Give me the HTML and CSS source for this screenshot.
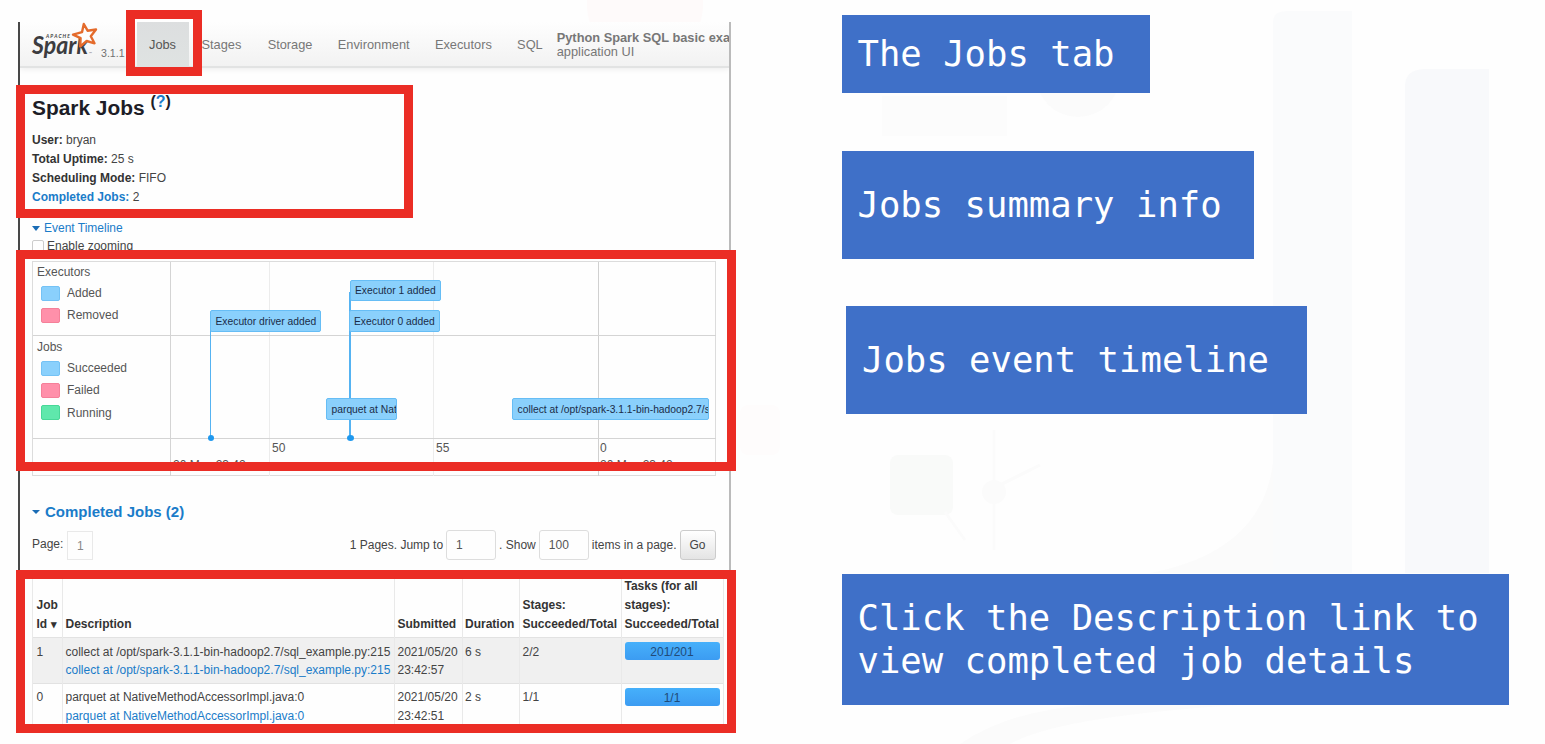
FILE: index.html
```html
<!DOCTYPE html>
<html lang="en">
<head>
<meta charset="utf-8">
<title>Spark Jobs</title>
<link rel="stylesheet" href="styles.css">
</head>
<body>
<svg class="backdrop" viewBox="0 0 1545 744" aria-hidden="true">
  <path d="M1274 410V450Q1270 550 1150 573H1352V410Z" fill="#fbfbfb"/>
  <path d="M1273 573V22Q1273 11 1288 11H1352V573Z" fill="#fafbfc"/>
  <path d="M1405 573V86Q1405 70 1424 69H1489V573Z" fill="#f8f9fb"/>
  <path d="M960 744Q1010 710 1090 705H1240Q1060 716 1010 744Z" fill="#fbfbfb"/>
  <rect x="890" y="455" width="63" height="60" rx="8" fill="#f9faf9"/>
  <path d="M945 512L965 540M994 430V550M994 488L1040 465" stroke="#fbfbfb" stroke-width="3" fill="none"/>
  <circle cx="994" cy="492" r="12" fill="#fbfbfb"/>
  <circle cx="645" cy="5" r="58" fill="#fefafa"/>
  <circle cx="1078" cy="75" r="42" fill="#fbfbfb"/>
  <rect x="882" y="96" width="125" height="40" fill="#fcfcfc"/>
  <rect x="740" y="405" width="40" height="50" rx="8" fill="#fefcfc"/>
</svg>
<main class="slide">
  <section class="shot">
    <div class="pane">
      <nav class="navbar">
        <svg class="logo" viewBox="0 0 66 38" role="img" aria-label="Apache Spark">
          <text class="logo-small" x="14" y="16" textLength="24">APACHE</text>
          <text class="logo-word" x="0" y="32" textLength="56" lengthAdjust="spacingAndGlyphs">Spark</text>
          <path d="M51.8 2L55.6 8.7L64 7.5L58.8 14.3L62.5 21.3L54.7 19L48.2 24.5L48.6 16.2L41 12.6L50 10.2Z" fill="#fdfdfd" stroke="#e46b2c" stroke-width="2.4" stroke-linejoin="round"/>
          <text class="logo-tm" x="57" y="33">™</text>
        </svg>
        <span class="version">3.1.1</span>
        <a class="tab active">Jobs</a>
        <a class="tab">Stages</a>
        <a class="tab">Storage</a>
        <a class="tab">Environment</a>
        <a class="tab">Executors</a>
        <a class="tab">SQL</a>
        <p class="app"><b>Python Spark SQL basic example</b><br>application UI</p>
      </nav>
      <header class="summary">
        <h1>Spark Jobs <sup>(<a>?</a>)</sup></h1>
        <ul>
          <li><b>User:</b> bryan</li>
          <li><b>Total Uptime:</b> 25 s</li>
          <li><b>Scheduling Mode:</b> FIFO</li>
          <li><a><b>Completed Jobs:</b></a> 2</li>
        </ul>
      </header>
      <div class="toggle"><i class="caret"></i><a>Event Timeline</a></div>
      <div class="zooming"><i class="check"></i>Enable zooming</div>
      <div class="timeline">
        <div class="legend">
          <h2>Executors</h2>
          <p><i class="blue"></i>Added</p>
          <p><i class="pink"></i>Removed</p>
        </div>
        <div class="legend jobs">
          <h2>Jobs</h2>
          <p><i class="blue"></i>Succeeded</p>
          <p><i class="pink"></i>Failed</p>
          <p><i class="green"></i>Running</p>
        </div>
        <div class="legend-foot"></div>
        <div class="canvas">
          <i class="grid g50"></i><i class="grid g55"></i><i class="grid g0 major"></i>
          <i class="rule r1"></i><i class="rule r2"></i>
          <i class="stem s1"></i><i class="stem s2"></i>
          <i class="dot d1"></i><i class="dot d2"></i>
          <span class="event e1">Executor driver added</span>
          <span class="event e2">Executor 1 added</span>
          <span class="event e3">Executor 0 added</span>
          <span class="event e4">parquet at NativeMethodAccessorImpl</span>
          <span class="event e5">collect at /opt/spark-3.1.1-bin-hadoop2.7/sql</span>
          <span class="tick t50">50</span><span class="tick t55">55</span><span class="tick t0">0</span>
          <span class="tick day day1">20 May 23:42</span><span class="tick day day2">20 May 23:42</span>
        </div>
      </div>
      <h3 class="completed"><i class="caret"></i><a>Completed Jobs (2)</a></h3>
      <div class="pager">
        <span class="page">Page:</span><span class="current">1</span>
        <span class="jump">1 Pages. Jump to</span><span class="field">1</span>
        <span class="show">. Show</span><span class="field">100</span>
        <span class="items">items in a page.</span><span class="go">Go</span>
      </div>
      <table>
        <colgroup><col class="c1"><col class="c2"><col class="c3"><col class="c4"><col class="c5"><col class="c6"></colgroup>
        <thead><tr><th>Job<br>Id <small>▾</small></th><th>Description</th><th>Submitted</th><th>Duration</th><th>Stages:<br>Succeeded/Total</th><th>Tasks (for all<br>stages):<br>Succeeded/Total</th></tr></thead>
        <tbody>
          <tr><td>1</td><td>collect at /opt/spark-3.1.1-bin-hadoop2.7/sql_example.py:215<br><a>collect at /opt/spark-3.1.1-bin-hadoop2.7/sql_example.py:215</a></td><td>2021/05/20<br>23:42:57</td><td>6 s</td><td>2/2</td><td><div class="bar">201/201</div></td></tr>
          <tr><td>0</td><td>parquet at NativeMethodAccessorImpl.java:0<br><a>parquet at NativeMethodAccessorImpl.java:0</a></td><td>2021/05/20<br>23:42:51</td><td>2 s</td><td>1/1</td><td><div class="bar">1/1</div></td></tr>
        </tbody>
      </table>
    </div>
    <i class="mark mark-tab"></i>
    <i class="mark mark-summary"></i>
    <i class="mark mark-timeline"></i>
    <i class="mark mark-table"></i>
  </section>
  <aside class="notes">
    <p class="note n1">The Jobs tab</p>
    <p class="note n2">Jobs summary info</p>
    <p class="note n3">Jobs event timeline</p>
    <p class="note n4">Click the Description link to<br>view completed job details</p>
  </aside>
</main>
</body>
</html>
```
FILE: styles.css
```css
* { box-sizing: border-box; }
body { margin: 0; width: 1545px; height: 744px; overflow: hidden; background: #fefefe; font: 12px/18.7px "Liberation Sans", Arial, sans-serif; color: #444; }
h1, h2, h3, p, ul { margin: 0; padding: 0; list-style: none; }
a { color: #1a7cc9; }
.backdrop { position: absolute; left: 0; top: 0; width: 1545px; height: 744px; }
.slide { position: relative; display: flex; }
.shot { width: 841.5px; padding: 22px 0 0 18px; }
.pane { width: 713px; height: 706px; overflow: hidden; background: #fefefe; border-left: 2px solid #484848; border-right: 2px solid #bbb; }

.navbar { display: flex; align-items: center; height: 46px; padding-left: 12px; background: linear-gradient(#fefefe, #f2f2f2); border-bottom: 2px solid #e2e3e3; box-shadow: 0 1px 6px #00000014; font-size: 12.8px; white-space: nowrap; }
.logo { width: 66px; height: 38px; flex: none; margin-top: -7px; overflow: visible; }
.logo-word { font: italic bold 25.5px Lato, sans-serif; fill: #3c3c40; }
.logo-small { font: italic bold 5px Lato, sans-serif; fill: #444; }
.logo-tm { font: 4px Lato, sans-serif; fill: #777; }
.version { width: 39px; padding: 18px 0 0 3px; font-size: 10.6px; color: #707070; flex: none; }
.tab { color: #777; margin-right: 25.3px; padding-top: 2px; flex: none; }
.tab.active { width: 52px; height: 46px; line-height: 46px; margin: 0 12.5px 0 0; padding: 1px 1px 0 0; text-align: center; background: linear-gradient(#dcdedf, #dfe3e2); color: #555; }
.tab:nth-last-child(2) { margin-right: 13px; }
.tab:nth-last-child(-n+5) { position: relative; left: 1px; }
.app { padding: 1px 0 0 2px; line-height: 13.5px; color: #777; }

.summary { height: 149px; padding: 25px 12px 0; }
h1 { font-size: 20.9px; line-height: 30px; color: #1d1d27; }
sup { font-size: 16px; line-height: 0; vertical-align: 8px; }
.summary ul { padding-top: 8.4px; }
.summary b { color: #333; }
.summary a b { color: #1a7cc9; }
.toggle { display: flex; align-items: center; height: 22px; padding-left: 12px; }
.caret { width: 0; height: 0; border: 4px solid transparent; border-top: 5px solid #1a6cb5; border-bottom: 0; margin-right: 4px; }
.completed .caret { border-top-width: 4px; margin-right: 5px; }
.zooming { display: flex; align-items: center; height: 15px; padding-left: 12px; }
.check { width: 12px; height: 13px; border: 1px solid #ccc; border-radius: 2px; margin-right: 3px; }

.timeline { display: grid; grid-template: 74px 103px 37px / 138px 545px; width: 684px; height: 215px; margin: 7px 0 0 12px; border: 1px solid #dcdcdc; }
.legend { padding: 1px 4px 0 4px; border: solid #d4d4d4; border-width: 0 1px 1px 0; color: #555; }
.legend h2 { font-size: 12px; font-weight: normal; line-height: 18px; }
.legend p { display: flex; align-items: center; height: 22.4px; padding-left: 3.5px; position: relative; top: 1px; }
.legend i { width: 19px; height: 15px; margin-right: 7.5px; border: 1px solid; border-radius: 2px; }
.jobs { padding-top: 2px; }
.legend .blue { background: #8ad0fc; border-color: #74c2f5; }
.legend .pink { background: #ff90aa; border-color: #f58099; }
.legend .green { background: #5fe8ac; border-color: #48d898; }
.legend-foot { border-right: 1px solid #d4d4d4; }
.canvas { position: relative; grid-area: 1 / 2 / 4 / 3; overflow: hidden; }
.canvas > * { position: absolute; }
.grid { top: 0; bottom: 0; width: 1px; background: #ececec; }
.grid.major { background: #d0d0d0; }
.g50 { left: 98px; } .g55 { left: 262px; } .g0 { left: 427px; }
.rule { left: 0; right: 0; height: 1px; background: #d4d4d4; }
.r1 { top: 73px; } .r2 { top: 176px; }
.stem { width: 2px; background: #55b3f2; }
.s1 { left: 39px; top: 60px; height: 117px; width: 1px; } .s2 { left: 178px; top: 30px; height: 147px; }
.dot { width: 6px; height: 6px; border-radius: 50%; background: #1e98ee; top: 173px; }
.d1 { left: 37px; } .d2 { left: 175.5px; width: 7px; }
.event { height: 22px; padding-left: 4.5px; overflow: hidden; white-space: nowrap; background: #8ad0fc; border: 1px solid #66bdf5; border-radius: 2px; font-size: 10.3px; line-height: 21px; color: #1a2c48; }
.e1 { left: 39px; top: 48px; width: 111px; }
.e2 { left: 178.5px; top: 18px; width: 91px; height: 21px; line-height: 19px; }
.e3 { left: 178px; top: 48px; width: 91px; padding-left: 4px; }
.e4 { left: 155px; top: 136px; width: 71px; }
.e5 { left: 341px; top: 136px; width: 197px; }
.tick { font-size: 12px; color: #555; }
.t50 { left: 101px; top: 177px; } .t55 { left: 265px; top: 177px; } .t0 { left: 429px; top: 177px; }
.day { top: 194px; height: 14px; overflow: hidden; } .day1 { left: 2px; } .day2 { left: 429px; }

.completed { display: flex; align-items: center; height: 30px; margin-top: 21px; padding-left: 12px; font-size: 15px; }
.pager { display: flex; align-items: center; height: 36px; padding: 0 13.5px 0 12px; white-space: nowrap; }
.page { padding-bottom: 2px; }
.current { width: 26px; height: 29px; margin-left: 4px; border: 1px solid #e9e9e9; line-height: 29px; text-align: center; color: #888; }
.jump { margin-left: auto; padding-right: 3px; }
.field { width: 50px; height: 30px; border: 1px solid #ddd; border-radius: 3px; line-height: 29px; padding-left: 9px; color: #555; }
.show { padding: 0 3px; }
.items { padding: 0 3px; }
.go { width: 36px; height: 30px; border: 1px solid #ccc; border-radius: 3px; background: linear-gradient(#fff, #e4e4e4); text-align: center; line-height: 29px; }

table { width: 692px; margin: 9px 0 0 12px; table-layout: fixed; border-collapse: collapse; white-space: nowrap; }
.c1 { width: 30px; } .c2 { width: 332px; } .c3 { width: 67.5px; } .c4 { width: 57.5px; } .c5 { width: 102px; }
th, td { padding: 5px 0 3px 2.5px; text-align: left; border-left: 1px solid #e9e9e9; }
th { height: 65px; vertical-align: bottom; color: #333; padding-bottom: 3px; }
th:first-child, td:first-child { padding-left: 3.5px; }
th small { font-size: 11px; }
td { height: 45.5px; vertical-align: top; border-top: 1px solid #e2e2e2; }
tr:last-child td { padding-top: 4px; }
th:last-child, td:last-child { border-right: 1px solid #e9e9e9; }
tbody tr:first-child { background: #f0f0f0; }
.bar { width: 95px; height: 18px; margin-top: -1px; border-radius: 3px; background: linear-gradient(#46b0fb, #3c9cf2); text-align: center; line-height: 20px; color: #214b78; }
tr:last-child .bar { margin-top: 0; }

.mark { position: absolute; border: 9px solid #eb2d25; }
.mark-tab { left: 126px; top: 10px; width: 76px; height: 66px; }
.mark-summary { left: 16px; top: 85px; width: 397px; height: 133px; }
.mark-timeline { left: 16px; top: 250px; width: 720px; height: 221px; }
.mark-table { left: 16px; top: 570px; width: 720px; height: 163px; }

.notes { width: 700px; padding-top: 15px; }
.note { display: flex; align-items: center; padding: 0 0 2px 16px; background: #3f70c8; color: #fff; font: 35.6px/43px "DejaVu Sans Mono", monospace; white-space: nowrap; }
.n1 { width: 308px; height: 78px; }
.n2 { width: 412px; height: 108px; margin-top: 58px; }
.n3 { width: 461px; height: 108px; margin: 47px 0 0 4.5px; }
.n4 { width: 667px; height: 131px; margin-top: 160px; }
```
